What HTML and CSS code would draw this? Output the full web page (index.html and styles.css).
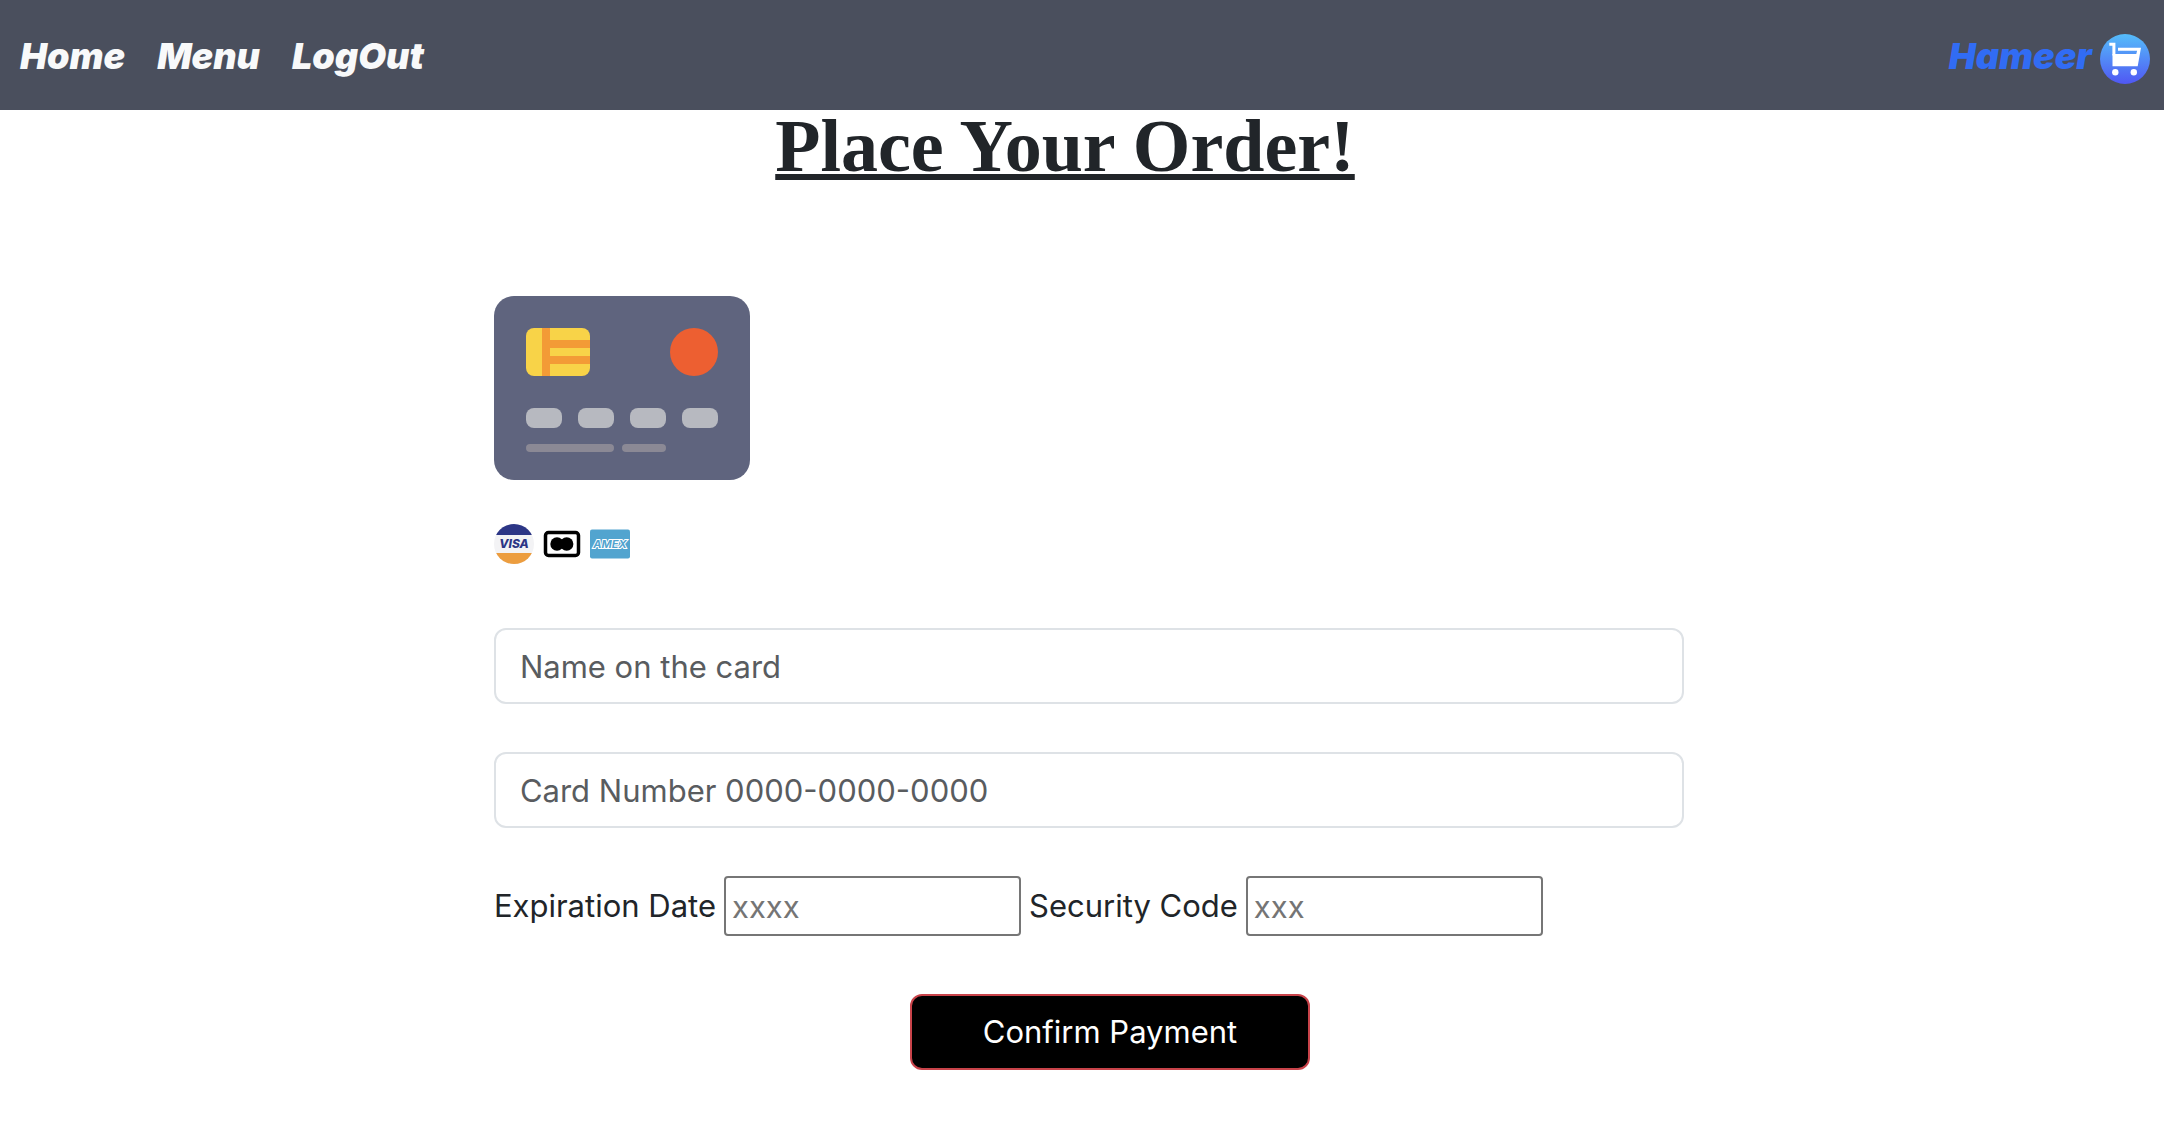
FILE: index.html
```html
<!DOCTYPE html>
<html lang="en">
<head>
<meta charset="utf-8">
<meta name="viewport" content="width=device-width, initial-scale=1">
<title>Place Your Order</title>
<link rel="stylesheet" href="styles.css">
</head>
<body>
<header class="navbar">
  <nav class="nav-links">
    <a href="#">Home</a>
    <a href="#">Menu</a>
    <a href="#">LogOut</a>
  </nav>
  <a class="account" href="#">
    <span>Hameer</span>
    <svg class="cart" viewBox="0 0 50 50" role="img" aria-label="Cart">
      <defs>
        <linearGradient id="cart-fill" x1="0" y1="0" x2="0" y2="1">
          <stop offset="0" stop-color="#55bdfa"/>
          <stop offset="1" stop-color="#5057f3"/>
        </linearGradient>
      </defs>
      <circle cx="25" cy="25" r="25" fill="url(#cart-fill)"/>
      <path d="M9.300 10.300h4.600v11.200" fill="none" stroke="#fff" stroke-width="3"/>
      <path d="M12.500 20h23.800l.8-3.300H18v-2.900h23L37.700 32.200H12.500z" fill="#fff"/>
      <circle cx="15.300" cy="38.300" r="3.200" fill="#fff"/>
      <circle cx="33.800" cy="38.300" r="3.200" fill="#fff"/>
    </svg>
  </a>
</header>
<main class="page">
  <h1 class="title">Place Your Order!</h1>
  <form class="payment">
    <svg class="card" viewBox="0 0 256 184" aria-hidden="true">
      <rect width="256" height="184" rx="20" fill="#5f647e"/>
      <clipPath id="chip"><rect x="32" y="32" width="64" height="48" rx="8"/></clipPath>
      <g clip-path="url(#chip)">
        <rect x="32" y="32" width="64" height="48" fill="#f8d348"/>
        <path d="M48 32h8v12h40v8H56v8h40v8H56v12h-8z" fill="#f39b36"/>
      </g>
      <circle cx="200" cy="56" r="24" fill="#ed5f31"/>
      <g fill="#b7b9c0">
        <rect x="32" y="112" width="36" height="20" rx="8"/>
        <rect x="84" y="112" width="36" height="20" rx="8"/>
        <rect x="136" y="112" width="36" height="20" rx="8"/>
        <rect x="188" y="112" width="36" height="20" rx="8"/>
      </g>
      <g fill="#8b8995">
        <rect x="32" y="148" width="88" height="8" rx="4"/>
        <rect x="128" y="148" width="44" height="8" rx="4"/>
      </g>
    </svg>
    <div class="brands">
      <svg class="brand" viewBox="0 0 40 40" role="img" aria-label="Visa">
        <clipPath id="disc"><circle cx="20" cy="20" r="20"/></clipPath>
        <g clip-path="url(#disc)">
          <rect width="40" height="40" fill="#f3f3f5"/>
          <rect width="40" height="11" fill="#2c3686"/>
          <rect y="29" width="40" height="11" fill="#ec9d3f"/>
        </g>
        <text class="visa-text" x="20" y="24" text-anchor="middle">VISA</text>
      </svg>
      <svg class="brand" viewBox="0 0 40 40" role="img" aria-label="Mastercard">
        <rect x="3.500" y="8.500" width="33" height="23" rx="3" fill="#fff" stroke="#000" stroke-width="3.500"/>
        <circle cx="15" cy="20" r="6.700"/>
        <circle cx="24.700" cy="20" r="6.700"/>
      </svg>
      <svg class="brand" viewBox="0 0 40 40" role="img" aria-label="American Express">
        <rect y="5.500" width="40" height="29" rx="2" fill="#52a4cf"/>
        <text class="amex-text" x="20" y="24" text-anchor="middle">AMEX</text>
      </svg>
    </div>
    <input class="field" type="text" placeholder="Name on the card" aria-label="Name on the card">
    <input class="field" type="text" placeholder="Card Number 0000-0000-0000" aria-label="Card Number">
    <div class="details">
      <label for="expiry">Expiration Date</label>
      <input class="short" id="expiry" type="text" placeholder="xxxx">
      <label for="code">Security Code</label>
      <input class="short" id="code" type="text" placeholder="xxx">
    </div>
    <div class="actions">
      <button class="confirm" type="submit">Confirm Payment</button>
    </div>
  </form>
</main>
</body>
</html>
```
FILE: styles.css
```css
* {
  box-sizing: border-box;
}

body {
  margin: 0;
  background: #fff;
  color: #212529;
  font-family: Inter, "Liberation Sans", sans-serif;
  font-size: 31px;
  line-height: 48px;
}

.navbar {
  display: flex;
  align-items: center;
  justify-content: space-between;
  height: 110px;
  padding: 8px 14px 0 20px;
  background: #4a4f5d;
  font-size: 36px;
  font-style: italic;
  font-weight: 900;
}

.nav-links {
  display: flex;
  gap: 32px;
  padding-bottom: 6px;
}

.nav-links a {
  color: #f8f9fa;
  text-decoration: none;
}

.account {
  display: flex;
  align-items: center;
  gap: 8px;
  color: #316cf4;
  text-decoration: none;
}

.account span {
  padding-bottom: 6px;
}

.cart {
  width: 50px;
  height: 50px;
}

.page {
  padding-left: 14px;
}

.title {
  margin: 0;
  padding-right: 48px;
  font-family: "Liberation Serif", serif;
  font-size: 74px;
  font-weight: 700;
  line-height: 72px;
  text-align: center;
  text-decoration: underline;
  text-decoration-thickness: 6px;
  text-decoration-skip-ink: none;
  text-underline-offset: 3px;
}

.payment {
  display: flex;
  flex-direction: column;
  width: 55vw;
  margin: 0 auto;
  padding-top: 114px;
}

.card {
  width: 256px;
  height: 184px;
}

.brands {
  display: flex;
  gap: 8px;
  margin: 44px 0 64px;
}

.brand {
  width: 40px;
  height: 40px;
}

.visa-text {
  fill: #2c3686;
  font-size: 12px;
  font-style: italic;
  font-weight: 800;
}

.amex-text {
  fill: #52a4cf;
  stroke: #fff;
  stroke-width: 2px;
  paint-order: stroke;
  font-size: 11px;
  font-style: italic;
  font-weight: 700;
}

.field {
  width: 100%;
  height: 76px;
  margin: 0 0 48px;
  padding: 12px 24px;
  border: 2px solid #dee2e6;
  border-radius: 12px;
  font: inherit;
}

.field::placeholder {
  color: #595c5f;
  opacity: 1;
}

.details {
  display: flex;
  align-items: center;
  gap: 8px;
}

.short {
  width: 297px;
  height: 60px;
  padding: 2px 6px;
  border: 2px solid #767676;
  border-radius: 4px;
  font: inherit;
}

.short::placeholder {
  color: #757575;
  opacity: 1;
}

.actions {
  display: flex;
  justify-content: center;
  margin-top: 58px;
  padding-left: 42px;
}

.confirm {
  width: 400px;
  height: 76px;
  border: 2px solid #c9434a;
  border-radius: 12px;
  background: #000;
  color: #fff;
  font: inherit;
}
```
